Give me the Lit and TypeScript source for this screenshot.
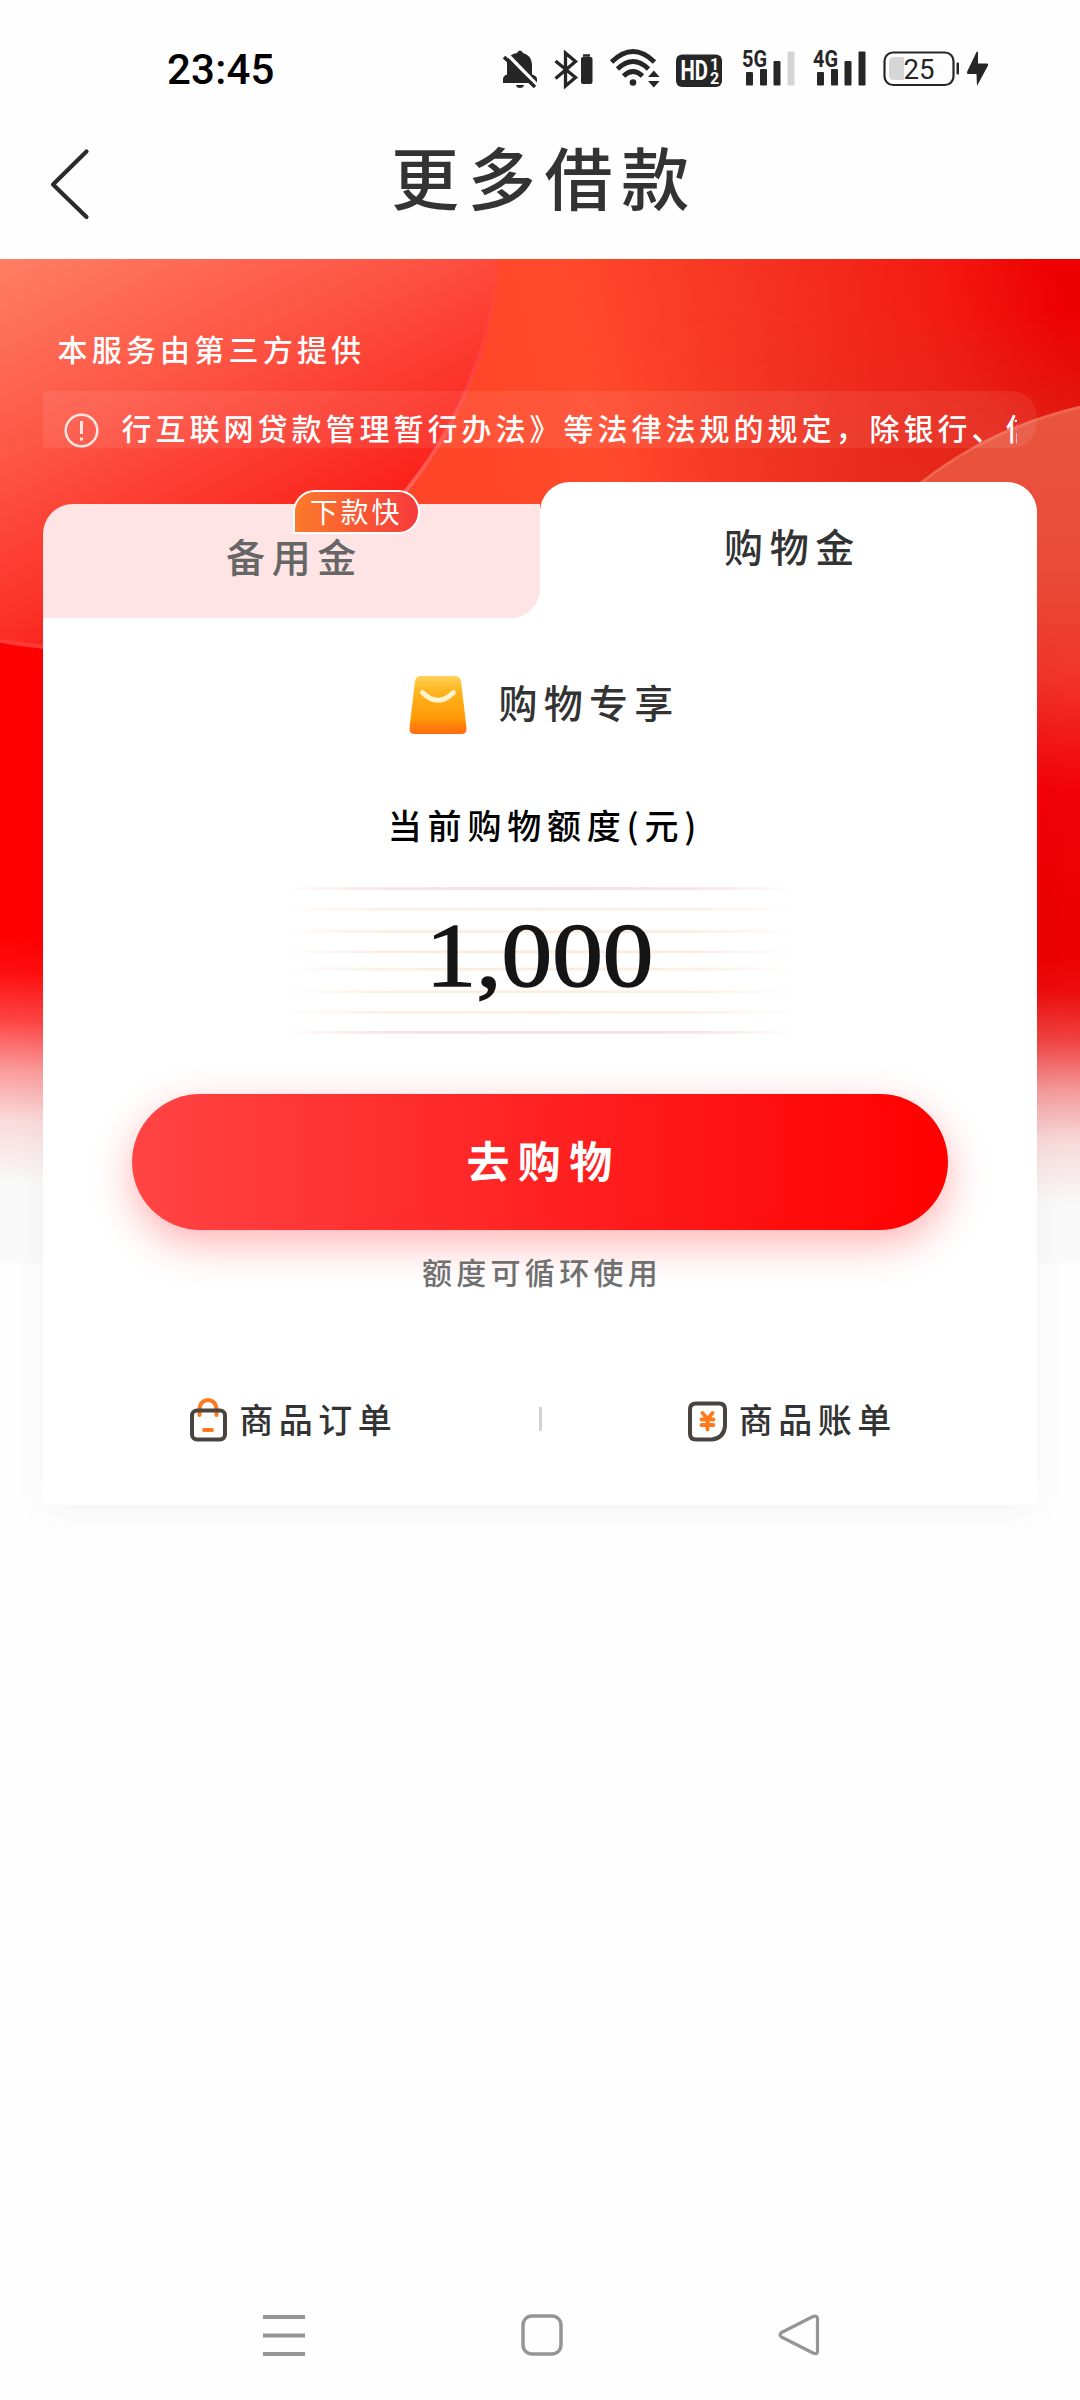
import { LitElement, html, css, svg } from "lit";
import { customElement } from "lit/decorators.js";

@customElement("status-bar")
class StatusBar extends LitElement {
  static styles = css`
    :host { display: flex; height: 138px; box-sizing: border-box; padding: 46px 91px 0 167px; align-items: flex-start; justify-content: space-between; }
    .time { font: 500 42px/48px Roboto, "Noto Sans", sans-serif; letter-spacing: 0.2px; color: #000; }
    .icons { display: flex; color: #262626; }
    svg { display: block; font-family: Roboto, "Liberation Sans", sans-serif; }
    .bell { margin-right: 15.500px; }
    .bt { margin-right: 16px; }
    .wifi { margin-right: 15px; }
    .hd { margin-right: 19.500px; }
    .sig { margin-right: 17.500px; }
    .bat { margin-right: 6px; }
  `;
  render() {
    return html`
      <div class="time">23:45</div>
      <div class="icons">
        <svg class="bell" width="36" height="44" viewBox="502 46 36 44">
          <path fill="currentColor" d="M503 83V79Q503 76 507 74.500V63Q508 54 517 53Q518 50.500 520 50.500T523 53Q531 55 532 64V74.500Q537 76 537 79V83ZM516 85H524Q523.500 88 520 88T516 85Z"/>
          <path d="M507 54L539 87" stroke="#fff" stroke-width="3.500"/>
          <path d="M504 57L535 87" stroke="currentColor" stroke-width="3.500"/>
        </svg>
        <svg class="bt" width="39" height="44" viewBox="554 46 39 44" fill="none" stroke="currentColor">
          <path stroke-width="3.300" d="M555.500 61L575.500 77.500L565.500 86V53L575.500 61.500L555.500 78.500"/>
          <rect x="581" y="57" width="11.500" height="27" rx="2" fill="currentColor" stroke="none"/>
          <path d="M583 55.500H590" stroke-width="2.500"/>
        </svg>
        <svg class="wifi" width="52" height="44" viewBox="609 46 52 44" fill="none" stroke="currentColor" stroke-width="4.800">
          <path d="M611.500 62Q633 41 654.500 62M617.500 69Q633 54 648.500 69M623.500 76Q633 67 642.500 76"/>
          <circle cx="633" cy="82.500" r="3.300" fill="currentColor" stroke="none"/>
          <path stroke="none" fill="currentColor" d="M648 77L653.800 70.500L659.600 77ZM648 81L653.800 87.500L659.600 81Z"/>
        </svg>
        <svg class="hd" width="47" height="44" viewBox="676 46 47 44">
          <rect x="676" y="54.500" width="46" height="32.500" rx="6" fill="currentColor"/>
          <g fill="#fff" font-weight="700">
            <text x="680.500" y="80" font-size="27" textLength="27.500" lengthAdjust="spacingAndGlyphs">HD</text>
            <text x="710" y="69.500" font-size="16">1</text>
            <text x="710" y="83.500" font-size="16">2</text>
          </g>
        </svg>
        ${this.signal("5G", "#d4d4d4")}
        ${this.signal("4G", "currentColor")}
        <svg class="bat" width="77" height="44" viewBox="883 46 77 44">
          <rect x="884.500" y="52.500" width="69" height="32.500" rx="8.500" fill="none" stroke="currentColor" stroke-width="2.200"/>
          <path d="M904 57H894Q889 57 889 62V75Q889 80 894 80H904Z" fill="#d6d6d6"/>
          <rect x="956.500" y="62.500" width="2.500" height="12" rx="1" fill="currentColor"/>
          <text x="903.500" y="78.500" font-size="27" font-weight="400" textLength="31" lengthAdjust="spacingAndGlyphs" fill="currentColor">25</text>
        </svg>
        <svg width="23" height="44" viewBox="966 46 23 44">
          <path fill="currentColor" d="M976.500 52L967 72Q966.500 74 968 74H976.500L977 86L988 65.500Q988.500 63.500 987 63.500H978V52.500Q977.500 51 976.500 52Z"/>
        </svg>
      </div>`;
  }
  private signal(label: string, last: string) {
    return html`<svg class="sig" width="53" height="44" viewBox="0 46 53 44">
      <text x="0" y="66.500" font-size="24" font-weight="700" textLength="25" lengthAdjust="spacingAndGlyphs" fill="currentColor">${label}</text>
      <g fill="currentColor">
        <rect x="4" y="72" width="7" height="13.500" rx="1"/>
        <rect x="18" y="69" width="7" height="16.500" rx="1"/>
        <rect x="31.500" y="61" width="7" height="24.500" rx="1"/>
      </g>
      <rect x="45.500" y="51.500" width="7" height="34" rx="1" fill=${last}/>
    </svg>`;
  }
}

@customElement("app-root")
class AppRoot extends LitElement {
  static styles = css`
    :host { display: block; width: 1080px; height: 2400px; background: #fefefe; overflow: hidden; font-family: "Noto Sans CJK SC", sans-serif; font-weight: 500; color: #333; }
    .page { display: flex; flex-direction: column; height: 2400px; }
    svg { display: block; flex: none; }
    .header { height: 121px; display: grid; grid-template-columns: 180px 1fr 180px; align-items: center; justify-items: center; }
    .back { justify-self: start; margin: -30px 0 0 49.500px; }
    .title { font-size: 68px; line-height: 84px; letter-spacing: 8.700px; margin: -46px 0 0 9px; }
    .body { position: relative; height: 1004px; flex: none; }
    .backdrop { position: absolute; inset: 0; }
    .content { position: relative; width: 994px; margin: 0 auto 0 43px; display: flex; flex-direction: column; }
    .provider { margin-top: 67px; padding-left: 14.500px; font-size: 30px; line-height: 44px; letter-spacing: 4.200px; color: #fff; }
    .notice { margin-top: 21px; height: 57px; display: flex; align-items: flex-start; overflow: hidden; box-sizing: border-box; padding: 22px 20px 0 20.500px; background: rgba(255,255,255,.08); border-radius: 0 26px 26px 0; color: #fff; }
    .notice-text { margin: -7px 0 0 23px; flex: 1; min-width: 0; overflow: hidden; white-space: nowrap; font-size: 30px; line-height: 42px; letter-spacing: 4px; }
    .tabs { position: relative; z-index: 1; height: 136px; margin-top: 34px; display: grid; grid-template-columns: 1fr 1fr; align-items: end; }
    .tab { text-align: center; font-size: 39px; letter-spacing: 6.600px; box-sizing: border-box; line-height: 56px; padding-left: 6px; }
    .idle { position: relative; height: 114px; background: radial-gradient(circle at 0 0, #fee4e4 30px, #fff 30.500px) 100% 100% / 30px 30px no-repeat, linear-gradient(#fee4e4, #fee4e4) 0 0 / calc(100% - 30px) 100% no-repeat, linear-gradient(#fee4e4, #fee4e4) 100% 0 / 30px calc(100% - 30px) no-repeat; border-radius: 30px 0 0 0; color: #666; padding-top: 23px; }
    .active { height: 136px; background: #fff; border-radius: 30px 30px 0 0; padding: 35px 0 0 8px; }
    .badge { position: absolute; left: 249.500px; top: -14px; width: 127px; height: 44px; box-sizing: border-box; border: 2.500px solid #fff; border-radius: 22px 22px 22px 2px; background: linear-gradient(90deg, #fb7a2b, #f73a3c); color: #fff; font-size: 28px; font-weight: 400; line-height: 39px; letter-spacing: 2.800px; text-align: center; }
    .card { height: 887px; background: #fff; box-shadow: 0 10px 34px rgba(0,0,0,.035); display: flex; flex-direction: column; align-items: center; }
    .exclusive { display: flex; align-items: center; gap: 32px; height: 60px; margin-top: 57px; font-size: 39px; letter-spacing: 6.200px; padding-left: 8px; }
    .exclusive span { line-height: 56px; margin-top: -8px; }
    .label { margin-top: 66px; font-size: 34px; line-height: 48px; letter-spacing: 5.800px; color: #000; padding-left: 10px; }
    .amount { width: 520px; height: 148px; margin-top: 38px; display: grid; place-items: center; }
    .amount > * { grid-area: 1 / 1; }
    .figure { font: 400 92px/100px "Liberation Serif", serif; color: #151515; -webkit-text-stroke: 1.500px #151515; transform: scaleX(1.1); margin: -13px 2px 0 0; }
    .buy { width: 816px; height: 136px; margin-top: 59px; border-radius: 68px; background: linear-gradient(90deg, #ff4444, #f00); box-shadow: 0 14px 42px rgba(255,0,0,.3); color: #fff; font-size: 43px; line-height: 130px; letter-spacing: 8.300px; text-align: center; font-weight: 700; padding-left: 7px; box-sizing: border-box; }
    .hint { margin-top: 20px; font-size: 30px; line-height: 42px; letter-spacing: 4.300px; color: #707070; padding-left: 4px; }
    .links { width: 994px; margin-top: 103px; display: grid; grid-template-columns: 1fr 3px 1fr; align-items: center; height: 48px; }
    .link { display: flex; justify-content: center; align-items: center; gap: 12px; font-size: 34px; line-height: 46px; letter-spacing: 5.500px; padding-left: 5px; }
    .link svg { margin-top: 2px; }
    .divider { height: 24px; background: #d2d2d2; }
    .nav { margin-top: auto; height: 90px; padding: 0 260px 20px 263px; display: flex; justify-content: space-between; align-items: center; }
  `;

  private backdrop() {
    return html`<svg class="backdrop" width="1080" height="1004" viewBox="0 259 1080 1004">
      <defs>
        <linearGradient id="base" gradientUnits="userSpaceOnUse" x1="0" y1="230" x2="210" y2="640">
          <stop offset="0" stop-color="#ff8468"/><stop offset=".45" stop-color="#fd5645"/><stop offset=".88" stop-color="#fb241c"/><stop offset="1" stop-color="#fb1a16"/>
        </linearGradient>
        <linearGradient id="outer" gradientUnits="userSpaceOnUse" x1="470" y1="420" x2="1060" y2="290">
          <stop offset="0" stop-color="#ff4527"/><stop offset=".2" stop-color="#ff4a2c"/><stop offset=".5" stop-color="#f63422"/><stop offset=".8" stop-color="#f31c12"/><stop offset="1" stop-color="#ee0000"/>
        </linearGradient>
        <linearGradient id="shade" gradientUnits="userSpaceOnUse" x1="0" y1="310" x2="0" y2="480">
          <stop offset="0" stop-color="#cf3420" stop-opacity="0"/><stop offset="1" stop-color="#d4301c" stop-opacity=".75"/>
        </linearGradient>
        <linearGradient id="across" x1="0" x2="1"><stop offset="0" stop-color="#000"/><stop offset="1" stop-color="#fff"/></linearGradient>
        <mask id="m"><rect x="640" y="259" width="440" height="400" fill="url(#across)"/></mask>
        <linearGradient id="orb" gradientUnits="userSpaceOnUse" x1="0" y1="400" x2="0" y2="920">
          <stop offset="0" stop-color="#e9553f"/><stop offset=".32" stop-color="#e84c38"/><stop offset=".53" stop-color="#f1352b"/><stop offset=".75" stop-color="#f20208"/><stop offset="1" stop-color="#ec0000"/>
        </linearGradient>
        <linearGradient id="fade" gradientUnits="userSpaceOnUse" x1="0" y1="932" x2="-5" y2="1182">
          <stop offset="0" stop-color="#f9f9f9" stop-opacity="0"/><stop offset=".15" stop-color="#f9f9f9" stop-opacity=".05"/><stop offset=".35" stop-color="#f9f9f9" stop-opacity=".27"/><stop offset=".55" stop-color="#f9f9f9" stop-opacity=".62"/><stop offset=".75" stop-color="#f9f9f9" stop-opacity=".87"/><stop offset="1" stop-color="#f9f9f9"/>
        </linearGradient>
        <linearGradient id="rim" gradientUnits="userSpaceOnUse" x1="0" y1="259" x2="0" y2="500">
          <stop offset="0" stop-color="#ff4b55" stop-opacity="0"/><stop offset=".4" stop-color="#ff3f4c" stop-opacity=".6"/><stop offset="1" stop-color="#ff6a60" stop-opacity=".9"/>
        </linearGradient>
      </defs>
      <rect x="0" y="259" width="1080" height="1004" fill="url(#outer)"/>
      <rect x="640" y="259" width="440" height="400" fill="url(#shade)" mask="url(#m)"/>
      <rect x="0" y="600" width="540" height="663" fill="#ff0000"/>
      <circle cx="76" cy="224" r="424" fill="url(#base)"/>
      <path d="M498.600 259A424 424 0 0 1 400 498" fill="none" stroke="url(#rim)" stroke-width="4"/>
      <path d="M-4 640A424 424 0 0 0 60 648" fill="none" stroke="#ff3a36" stroke-width="4"/>
      <circle cx="1172" cy="805" r="408" fill="url(#orb)"/>
      <path d="M910 492A408 408 0 0 1 1090 405" fill="none" stroke="#f0654f" stroke-width="3"/>
      <rect x="540" y="774" width="540" height="489" fill="url(#orb)"/>
      <rect x="0" y="900" width="1080" height="363" fill="url(#fade)"/>
    </svg>`;
  }

  private lines() {
    const rows: [number, string][] = [[889.5, "#f7cccc"], [910, "#fbe3cc"], [932.5, "#fbe0cc"], [952.8, "#fbdccb"], [970, "#fbe0c8"], [992.7, "#fbe3cc"], [1013.2, "#f9e4cf"], [1033.3, "#f7cccc"]];
    return html`<svg width="520" height="148" viewBox="280 888 520 148">
      <defs>
        <linearGradient id="ends" gradientUnits="userSpaceOnUse" x1="280" x2="800" y1="0" y2="0">
          <stop offset="0" stop-color="#000"/><stop offset=".2" stop-color="#8a8a8a"/><stop offset=".5" stop-color="#a0a0a0"/><stop offset=".8" stop-color="#8a8a8a"/><stop offset="1" stop-color="#000"/>
        </linearGradient>
        <mask id="lm" maskUnits="userSpaceOnUse" x="280" y="880" width="520" height="160"><rect x="280" y="880" width="520" height="160" fill="url(#ends)"/></mask>
      </defs>
      <g mask="url(#lm)">${rows.map(([y, c]) => svg`<rect x="280" y=${y - 1.3} width="520" height="2.800" fill=${c}/>`)}</g>
    </svg>`;
  }

  render() {
    return html`<div class="page">
      <status-bar></status-bar>
      <div class="header">
        <svg class="back" width="40" height="72" viewBox="50 148 40 72"><path d="M86.500 151.500L53 184.500L86.500 217" fill="none" stroke="#2b2b2b" stroke-width="4.200" stroke-linecap="round" stroke-linejoin="round"/></svg>
        <div class="title">更多借款</div>
      </div>
      <div class="body">
        ${this.backdrop()}
        <div class="content">
          <div class="provider">本服务由第三方提供</div>
          <div class="notice">
            <svg width="35" height="35" viewBox="0 0 35 35" fill="none" stroke="#ffe6e2" stroke-width="2.500"><circle cx="17.500" cy="17.500" r="15.800"/><path stroke-width="3" d="M17.500 8V21M17.500 24.500V27.500"/></svg>
            <div class="notice-text">行互联网贷款管理暂行办法》等法律法规的规定，除银行、信</div>
          </div>
          <div class="tabs">
            <div class="tab idle">备用金<div class="badge">下款快</div></div>
            <div class="tab active">购物金</div>
          </div>
          <div class="card">
            <div class="exclusive">
              <svg width="58" height="60" viewBox="0 0 58 60">
                <defs><linearGradient id="bag" x2="0" y2="1"><stop offset="0" stop-color="#ffd258"/><stop offset=".25" stop-color="#ffb520"/><stop offset=".72" stop-color="#ff9a06"/><stop offset="1" stop-color="#ff6a10"/></linearGradient></defs>
                <path d="M12 1H46Q51 1 52 6L57.500 53Q58 59 52 59H6Q0 59 .5 53L6 6Q7 1 12 1Z" fill="url(#bag)"/>
                <path d="M13.500 17.500Q29 33 44.500 17.500" fill="none" stroke="#fff4cf" stroke-width="4.800" stroke-linecap="round"/>
              </svg>
              <span>购物专享</span>
            </div>
            <div class="label">当前购物额度(元)</div>
            <div class="amount">${this.lines()}<div class="figure">1,000</div></div>
            <div class="buy">去购物</div>
            <div class="hint">额度可循环使用</div>
            <div class="links">
              <div class="link">
                <svg width="38" height="44" viewBox="190 1398 38 44" fill="none" stroke-width="4">
                  <path d="M200.500 1415V1408.500A8.500 8.500 0 0 1 217.500 1408.500V1415M205 1430H213" stroke="#ff7a1c" stroke-linecap="round"/>
                  <rect x="193" y="1410.500" width="33" height="29" rx="5" stroke="#4a4441"/>
                </svg>商品订单
              </div>
              <div class="divider"></div>
              <div class="link">
                <svg width="40" height="44" viewBox="686 1398 40 44" fill="none" stroke-width="4">
                  <path d="M695 1403.500H718Q724 1403.500 724 1409.500V1426Q723 1438 711 1439.500H695Q689 1439.500 689 1433.500V1409.500Q689 1403.500 695 1403.500Z" stroke="#4a4441"/>
                  <path d="M701.500 1413L706.500 1419L711.500 1413M706.500 1419V1429.500M700.500 1419.500H712.500M700.500 1425H712.500" stroke="#ff7a1c" stroke-width="3.800" stroke-linecap="round"/>
                </svg>商品账单
              </div>
            </div>
          </div>
        </div>
      </div>
      <div class="nav">
        <svg width="42" height="42" viewBox="0 0 42 42" stroke="#959595" stroke-width="3.800"><path d="M0 3H42M0 21.500H42M0 40H42"/></svg>
        <svg width="42" height="42" viewBox="0 0 42 42" fill="none" stroke="#959595" stroke-width="3.500"><rect x="2" y="2" width="38" height="38" rx="9"/></svg>
        <svg width="42" height="42" viewBox="0 0 42 42" fill="none" stroke="#959595" stroke-width="3.200" stroke-linejoin="round"><path d="M3.500 18.500L35 2.500Q39.500 1 39.500 5V37Q39.500 41 35 39L3.500 23Q.5 21 3.500 18.500Z"/></svg>
      </div>
    </div>`;
  }
}
